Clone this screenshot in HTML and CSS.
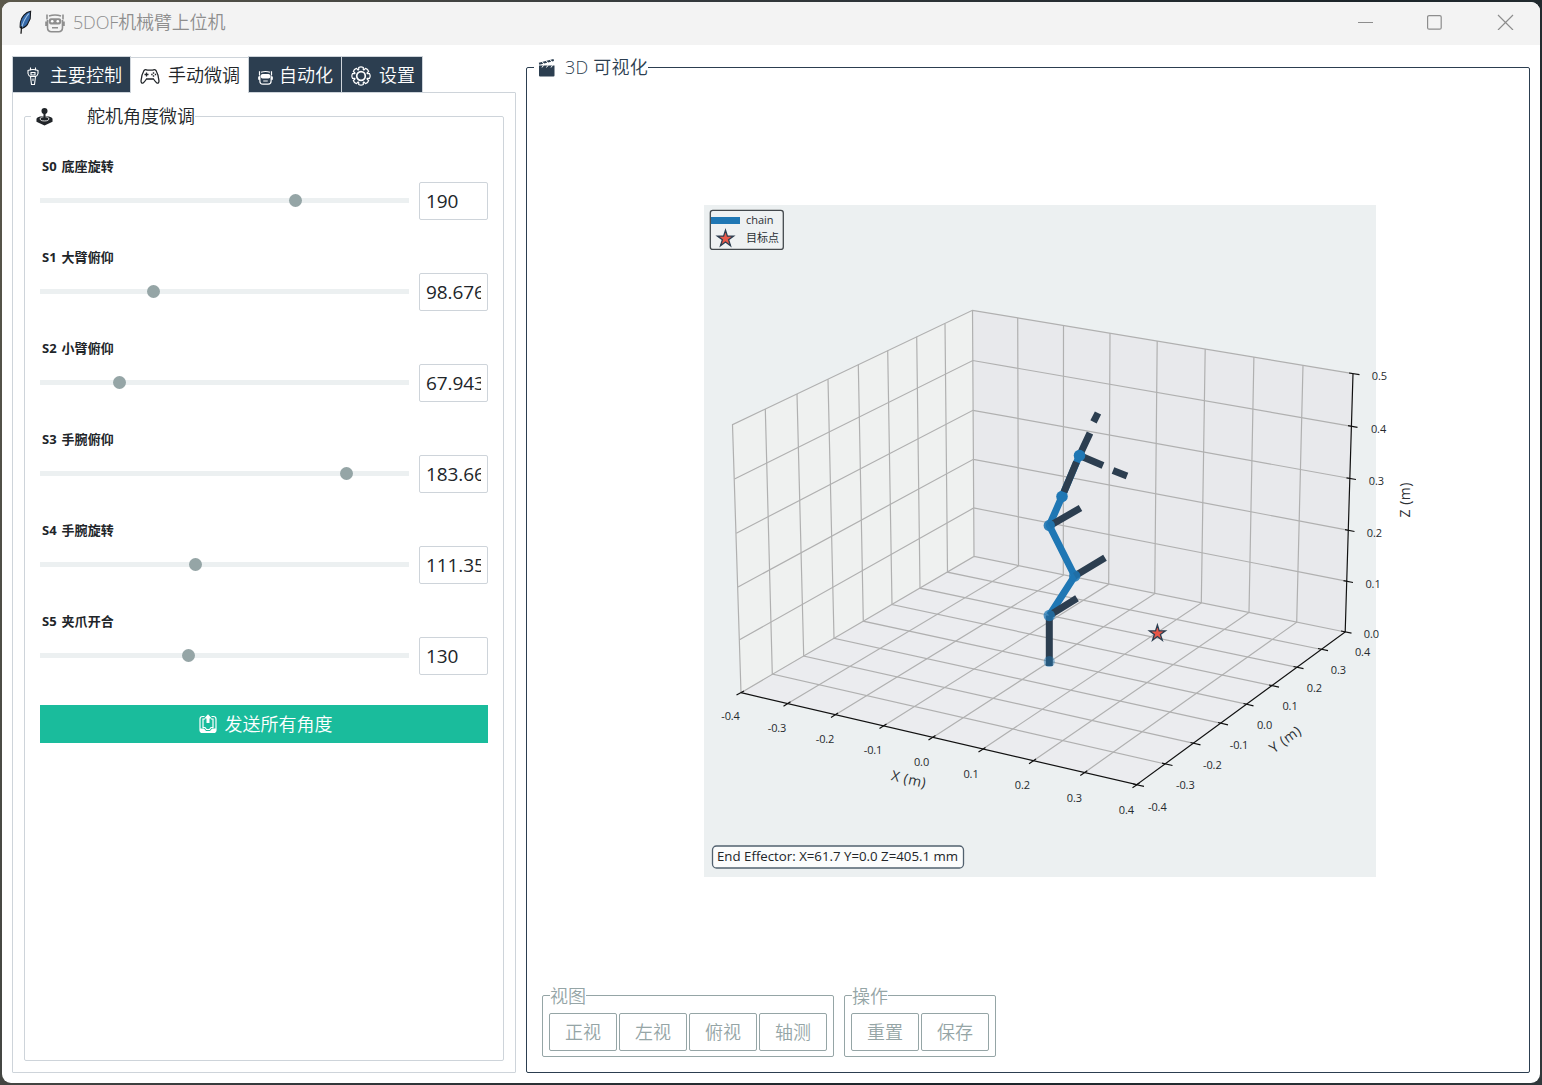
FILE: index.html
```html
<!DOCTYPE html>
<html lang="zh-CN">
<head>
<meta charset="utf-8">
<title>5DOF机械臂上位机</title>
<link rel="stylesheet" href="styles.css">
</head>
<body>
<svg width="0" height="0" class="defs" aria-hidden="true">
  <symbol id="robot" viewBox="0 0 20 20">
    <path d="M2 1.500v5M18 1.500v5M1 8.500v4.500M19 8.500v4.500M4 3Q10 1 16 3M2.500 7v7.500Q2.500 18.700 6.500 18.700h7Q17.500 18.700 17.500 14.500V7" fill="none" stroke="currentColor" stroke-width="1.600"/>
    <path d="M6 5.200h8Q16.300 5.200 16.300 8.300T14 11.400H6Q3.700 11.400 3.700 8.300T6 5.200z" fill="currentColor"/>
    <circle cx="7.200" cy="8.300" r="1.300" class="robot-eye"/><circle cx="12.800" cy="8.300" r="1.300" class="robot-eye"/>
    <path d="M7 14.700h6" stroke="currentColor" stroke-width="1.500"/>
  </symbol>
</svg>
<div class="window">
  <header class="titlebar">
    <svg class="feather" viewBox="0 0 16 26"><path d="M13.500 1C8 2 3.500 7 2.500 13l-.3 5 1.600 1.300C8 18 10 16.500 11 13l2-4z" fill="#3669a8" stroke="#15181c" stroke-width="1.100"/><path d="M11.500 3.500Q6 10 3.800 19" fill="none" stroke="#9fc4e6" stroke-width="1.100"/><path d="M3.800 17l-.6 8" stroke="#111" stroke-width="1.300"/></svg>
    <svg class="title-robot"><use href="#robot"/></svg>
    <span class="title">5DOF机械臂上位机</span>
    <svg class="controls" viewBox="0 0 156 16" fill="none" stroke="#8d8d8d" stroke-width="1.200"><path d="M0 8.500h15"/><rect x="69.600" y="1.600" width="13.600" height="13.600" rx="1.500"/><path d="M140 1l15 15M155 1l-15 15"/></svg>
  </header>
  <main class="content">
    <section class="side">
      <nav class="tabs">
        <div class="tab tab-main"><svg class="ico" viewBox="0 0 18 18" fill="none" stroke="currentColor" stroke-width="1.100"><path d="M6.500.500v3M11.500.500v3M4 3.500Q9 1.500 14 3.500v3Q13.500 8.800 11.500 9.500L10.500 17.500H7.500L6.500 9.500Q4.500 8.800 4 6.500zM7 5.500h4v2.500H7zM6.500 9.500h5M9 11.500v2.500"/></svg>主要控制</div>
        <div class="tab tab-fine active"><svg class="pad" viewBox="0 0 20 17" fill="none" stroke="currentColor" stroke-width="1.300"><path d="M4 2.500Q5.500.8 7.300 2.200h5.400Q14.500.8 16 2.500 18.500 6.500 19 13q-.3 2.800-2.200 2-1-.6-3.300-4h-7q-2.300 3.400-3.300 4-1.900.8-2.200-2Q1.500 6.500 4 2.500z"/><path d="M4.500 6.500h4M6.500 4.500v4M12.800 5h1.400M12.800 8h1.400M11.200 6.500h1.400M14.800 6.500h1.400"/></svg>手动微调</div>
        <div class="tab tab-auto"><svg class="bot"><use href="#robot"/></svg>自动化</div>
        <div class="tab tab-set"><svg class="gear" viewBox="0 0 20 20" fill="none" stroke="currentColor"><path stroke-width="1.200" d="M7.700 3.700V1.500Q10 .2 12.300 1.500v2.200l.6.300 1.600-1.600Q17 3 17.600 5.500L16 7.100l.3.600h2.200Q19.800 10 18.500 12.300h-2.200l-.3.600 1.600 1.600Q17 17 14.500 17.600L12.900 16l-.6.300v2.200Q10 19.800 7.700 18.500v-2.200L7.100 16l-1.600 1.600Q3 17 2.400 14.500L4 12.900l-.3-.6H1.500Q.2 10 1.500 7.700h2.200L4 7.100 2.400 5.500Q3 3 5.500 2.400L7.100 4z"/><circle cx="10" cy="10" r="4.300" stroke-width="1.700"/></svg>设置</div>
      </nav>
      <div class="pane">
        <div class="frame servo">
          <div class="legend servo-legend"><svg class="joy" viewBox="0 0 18 20"><path d="M.5 12.500Q2 9.500 9 9.500t8.500 3v3L9 19.500.5 15.500z" fill="currentColor"/><ellipse cx="9" cy="12.500" rx="4.600" ry="2.200" fill="none" stroke="#fff" stroke-width=".9"/><circle cx="9" cy="4.300" r="3.200" fill="currentColor"/><path d="M7.900 6h2.200v6.500H7.900z" fill="currentColor"/></svg>舵机角度微调</div>
          <div class="joint"><b>S0 底座旋转</b><div class="row"><div class="track"><i style="left:255.500px"></i></div><input value="190"></div></div>
          <div class="joint"><b>S1 大臂俯仰</b><div class="row"><div class="track"><i style="left:113.500px"></i></div><input value="98.676"></div></div>
          <div class="joint"><b>S2 小臂俯仰</b><div class="row"><div class="track"><i style="left:79.700px"></i></div><input value="67.943"></div></div>
          <div class="joint"><b>S3 手腕俯仰</b><div class="row"><div class="track"><i style="left:306.700px"></i></div><input value="183.66"></div></div>
          <div class="joint"><b>S4 手腕旋转</b><div class="row"><div class="track"><i style="left:155.700px"></i></div><input value="111.35"></div></div>
          <div class="joint"><b>S5 夹爪开合</b><div class="row"><div class="track"><i style="left:148.500px"></i></div><input value="130"></div></div>
          <button class="send"><svg class="out" viewBox="0 0 18 20" fill="none" stroke="currentColor" stroke-width="1.200"><path d="M5.500 2.500H3.500Q1 2.500 1 5v11q0 2.500 2.500 2.500h11Q17 18.500 17 16V5q0-2.500-2.500-2.500h-2"/><path d="M6 5H4v8.500h2l1.500 2h3l1.500-2h2V5h-2"/><path d="M1 14.500h4l2 2.500h4l2-2.500H17v2.500l-2 2H3l-2-2z" fill="currentColor" stroke="none"/><path d="M9 .2l3.800 4.300h-2.300V9h-3V4.500H5.200z" fill="currentColor" stroke="none"/></svg>发送所有角度</button>
        </div>
      </div>
    </section>
    <section class="frame visual">
      <div class="legend visual-legend"><svg class="clap" viewBox="0 0 18 19"><path d="M1 7.500h15.500v10q0 1-1 1H2q-1 0-1-1z" fill="currentColor"/><path d="M.8 4.700L15.500.900l.5 2L1.300 6.700z" fill="currentColor"/><path d="M4 3.500l1.800 2.500M8 2.500l1.800 2.500M12 1.500l1.800 2.500M4 9.500l1.500-2.200M8.500 9.500l1.500-2.200M13 9.500l1.500-2.200" stroke="#fff" stroke-width="1"/></svg>3D 可视化</div>
      <svg class="plot" viewBox="704 205 720 672">
        <path d="M704 205h672v672H704z" fill="#ecf0f1"/>
        <path d="M732.500 424.700L972.500 310.300 974 556.500 741 692.700z" fill="#eff1f0"/>
        <path d="M972.500 310.300L1353 373.700 1345.200 632 974 556.500z" fill="#e8e9ec"/>
        <path d="M974 556.500L1345.200 632 1136.700 784.700 741 692.700z" fill="#ebecef"/>
        <g class="grid">
          <path d="M741 692.700L732.500 424.700 972.500 310.300 1353 373.700M972.500 310.300L974 556.500M741 692.700L974 556.500 1345.200 632"/>
          <path d="M787.300 703.700L1018.500 565.800 1017.700 317.800M835 715L1063.300 575.200 1063.500 325.400M883.500 726L1108.700 584.300 1110 333.100M932.700 737.500L1154.700 593.700 1157.200 340.900M982.500 749.300L1201.300 603 1205.200 348.900M1033 761L1249 612.500 1253.900 357M1084.300 772.700L1296.700 622.200 1303 365.200"/>
          <path d="M1165.500 764L772.300 674 765.300 409M1194 743.300L803.700 656 797 394M1221.500 723.300L834 638.300 828 379.300M1247.500 704.300L863.300 621.200 858.300 364.800M1272.700 685.700L892 604.600 887.700 350.500M1297.300 667.400L920 588.200 916.700 336.700M1321.700 649.500L947.500 572.200 945 323.500"/>
          <path d="M734.500 479L972.800 360.500 1351.700 426.300M736.300 533.300L973 410.300 1350.300 478.500M738 587L973.400 459.300 1349 530.300M739.500 639.800L973.700 508 1347.500 581.300"/>
        </g>
        <path class="axis" d="M741 692.700L1136.700 784.700 1345.200 632 1353 373.700"/>
        <path class="tick" d="M736.500 695l7.500-4M783.500 706.300l7-4.500M831 717.500l7-4.500M879.500 728.600l7-4.500M928.500 740l7-4.500M978.500 752l7-4.500M1029 763.800l7-4.700M1080.300 775.500l7-4.700M1132.500 787.700l7-4.700"/>
        <path class="tick" d="M1133 784l11 2.300M1162 763.200l10.500 2.300M1190.500 742.500l10 2.300M1218 722.500l10 2.300M1243.500 703.500l10 2.300M1269 685l10 2.200M1293.500 666.500l10 2.200M1318 648.500l10 2.200M1341 631l10.500 2.200M1343.500 580.600l9.500 1.900M1345 529.700l9.500 1.800M1346.500 477.800l9.500 1.700M1348 425.700l9.500 1.700M1349 373l10.500 1.700"/>
        <g class="nums">
          <text x="730.500" y="719.700">-0.4</text><text x="777" y="731.700">-0.3</text><text x="825" y="742.700">-0.2</text><text x="873" y="753.700">-0.1</text><text x="921.500" y="765.700">0.0</text><text x="971" y="777.700">0.1</text><text x="1022.300" y="788.700">0.2</text><text x="1074.300" y="801.700">0.3</text><text x="1126.300" y="813.700">0.4</text>
          <text x="1157.300" y="810.700">-0.4</text><text x="1185.300" y="788.700">-0.3</text><text x="1212.300" y="768.700">-0.2</text><text x="1239" y="748.700">-0.1</text><text x="1264.500" y="728.700">0.0</text><text x="1290" y="709.700">0.1</text><text x="1314.300" y="691.700">0.2</text><text x="1338.300" y="673.700">0.3</text><text x="1362.500" y="655.700">0.4</text>
          <text x="1371.300" y="637.700">0.0</text><text x="1373" y="587.700">0.1</text><text x="1374.300" y="536.700">0.2</text><text x="1376.300" y="484.700">0.3</text><text x="1378.500" y="432.700">0.4</text><text x="1379.300" y="379.900">0.5</text>
        </g>
        <g class="names">
          <text transform="translate(907.500 784) rotate(13)" textLength="35">X (m)</text>
          <text transform="translate(1288 743.500) rotate(-36)" textLength="35">Y (m)</text>
          <text transform="translate(1410 500) rotate(-90)" textLength="35">Z (m)</text>
        </g>
        <path d="M1049.300 615.500L1074.700 576 1049.300 525.500 1062 496.500 1079.500 455.500" fill="none" stroke="#1f77b4" stroke-width="7" stroke-linejoin="round"/>
        <circle cx="1062" cy="496.500" r="5.800" fill="#1f77b4"/>
        <path class="arm" d="M1049.300 666V615.500M1049.300 615.500L1077 598.300M1074.700 576L1105 557.700M1049.300 526L1080.500 508M1064 492L1076.500 462M1079.500 455.500L1090 433M1093.500 421.800L1098 413M1079.500 455.500L1103 465.500M1113 470.500L1127 476"/>
        <g fill="#1f77b4"><circle cx="1049.300" cy="661.500" r="5.500" opacity=".45"/><circle cx="1049.300" cy="615.500" r="5.700" opacity=".75"/><circle cx="1074.700" cy="576" r="5.700" opacity=".85"/><circle cx="1049.300" cy="525.500" r="5.700" opacity=".9"/><circle cx="1079.500" cy="455.500" r="5.800"/></g>
        <path class="star" d="M1157.400 625l1.800 5.800h6.200l-5 3.600 1.900 5.800-4.900-3.600-4.900 3.600 1.900-5.800-5-3.600h6.200z"/>
        <rect x="710.300" y="210.400" width="73" height="39" rx="2.500" fill="#eef1f2" stroke="#43484c" stroke-width="1.300"/>
        <path d="M711 217h29v7h-29z" fill="#1f77b4"/>
        <path class="star" d="M725.500 230.200l1.900 5.900h6.200l-5 3.700 1.900 5.900-5-3.700-5 3.700 1.900-5.900-5-3.700h6.200z"/>
        <g class="key"><text x="746" y="224" textLength="27.500">chain</text><text x="746" y="242.300" textLength="33">目标点</text></g>
        <rect x="712.500" y="846" width="251" height="22" rx="4" fill="#fbfcfc" stroke="#52616f" stroke-width="1.300"/>
        <text class="effector" x="717" y="861.200" textLength="241" lengthAdjust="spacingAndGlyphs">End Effector: X=61.7 Y=0.0 Z=405.1 mm</text>
      </svg>
      <div class="groups">
        <div class="frame group"><div class="legend">视图</div><div class="buttons"><button>正视</button><button>左视</button><button>俯视</button><button>轴测</button></div></div>
        <div class="frame group"><div class="legend">操作</div><div class="buttons"><button>重置</button><button>保存</button></div></div>
      </div>
    </section>
  </main>
</div>
</body>
</html>
```
FILE: styles.css
```css
* { box-sizing: border-box; }
body { margin: 0; width: 1542px; height: 1085px; padding: 2px; overflow: hidden; background: linear-gradient(110deg, #5b584b 0, #34393c 35%, #1b2429 70%, #30383b 100%); font: 350 18px/24px "Open Sans", "Noto Sans CJK SC", sans-serif; color: #212529; }
.defs { position: absolute; }
svg { display: block; flex: none; }
.robot-eye { fill: #fff; }
.window { height: 1081px; width: 1538px; background: #fff; border-radius: 9px; overflow: hidden; display: flex; flex-direction: column; }
.titlebar { height: 43px; flex: none; background: #f3f3f3; display: flex; align-items: center; color: #8e8e8e; padding: 0 26px 3px 16px; }
.feather { width: 15px; height: 25px; }
.title-robot { width: 20px; height: 20px; margin: 2px 0 0 12px; }
.title { margin-left: 8px; letter-spacing: -.15px; }
.controls { width: 156px; height: 16px; margin-left: auto; }
.content { flex: 1; display: flex; gap: 10px; padding: 12px 10px 10px; }
.side { width: 504px; display: flex; flex-direction: column; }
.tabs { display: flex; gap: 1px; height: 35px; padding-left: 1px; flex: none; }
.tab { height: 35px; background: #2c3e50; color: #fff; display: flex; align-items: center; padding-top: 1px; outline: 1px solid #ced4da; white-space: nowrap; }
.active { background: #fff; color: #212529; height: 36px; position: relative; outline: 0; border-top: 1px solid #ced4da; padding-top: 0; padding-bottom: 1px; }
.tab-main { width: 117px; padding-left: 11px; }
.tab-fine { width: 117px; padding-left: 9px; }
.tab-auto { width: 92px; padding-left: 9px; }
.tab-set { width: 80px; padding-left: 9px; }
.ico { width: 18px; height: 18px; margin: 2px 8px 0 0; }
.pad { width: 20px; height: 17px; margin: 3px 8px 0 0; }
.bot { width: 15px; height: 15px; margin: 4px 6px 0 0; }
.gear { width: 20px; height: 20px; margin: 1px 8px 0 0; }
.tab-auto .robot-eye { fill: #2c3e50; }
.pane { flex: 1; border: 1px solid #ced4da; border-radius: 1px; padding: 23px 11px 11px; display: flex; }
.frame { border: 1px solid #ced4da; border-radius: 2px; display: flex; flex-direction: column; align-items: flex-start; }
.legend { background: #fff; height: 24px; margin-top: -13px; display: flex; align-items: center; flex: none; white-space: nowrap; }
.servo { flex: 1; padding: 0 15px; }
.servo-legend { margin-left: -9px; padding-left: 5px; }
.joy { width: 17px; height: 19px; margin: 1px 34px 0 0; }
.joint { width: 448px; height: 91px; padding-top: 28px; flex: none; }
.joint b { display: block; height: 20px; line-height: 20px; font-size: 13px; font-weight: 700; padding-left: 2px; word-spacing: 1px; letter-spacing: .15px; }
.row { display: flex; align-items: center; gap: 10px; margin-top: 6px; height: 38px; }
.track { width: 369px; height: 5px; background: #ecf0f1; position: relative; margin-top: -1px; }
.track i { position: absolute; width: 13.500px; height: 13.500px; border-radius: 50%; background: #95a5a6; top: -4.500px; margin-left: -7px; }
input { width: 69px; height: 38px; border: 1px solid #ced4da; border-radius: 2px; padding: 0 6px; font: 400 19px "Open Sans", sans-serif; letter-spacing: -.1px; color: #212529; outline: 0; }
button { font: inherit; margin: 0; padding: 0; }
.send { width: 448px; height: 38px; margin-top: 31px; border: 0; background: #1abc9c; color: #fff; display: flex; align-items: center; justify-content: center; gap: 8px; padding-left: 3px; }
.out { width: 18px; height: 20px; }
.visual { width: 1004px; margin-top: 10px; border-color: #2c3e50; color: #2c3e50; padding-bottom: 15px; }
.visual-legend { margin-left: 7px; padding-left: 4px; gap: 9px; letter-spacing: .2px; }
.clap { width: 18px; height: 19px; }
.plot { width: 720px; height: 672px; margin: 126px 0 0 177px; overflow: visible; }
.grid path { fill: none; stroke: #b0b0b0; stroke-width: 1.200; }
.axis, .tick { fill: none; stroke: #111; stroke-width: 1.200; }
.nums text { font: 400 11px "Open Sans", sans-serif; text-anchor: middle; fill: #262a2e; letter-spacing: -.1px; }
.names text { font: 400 14px "Open Sans", sans-serif; text-anchor: middle; fill: #2b3035; }
.key text { font: 400 11px "Open Sans", "Noto Sans CJK SC", sans-serif; fill: #2b3035; }
.effector { font: 400 13px "Open Sans", sans-serif; fill: #212529; }
.arm { fill: none; stroke: #2c3e50; stroke-width: 7; }
.star { fill: #e74c3c; fill-opacity: .93; stroke: #2c3e50; stroke-width: 1.300; }
.groups { display: flex; gap: 10px; margin: auto 0 0 15px; }
.group { height: 62px; border-color: #95a5a6; color: #95a5a6; padding: 0 6px; }
.group .legend { margin-left: 1px; margin-top: -12px; }
.buttons { display: flex; gap: 2px; margin-top: 5px; }
.buttons button { width: 68px; height: 38px; background: #fff; border: 1px solid #95a5a6; border-radius: 2px; color: #95a5a6; }
```
